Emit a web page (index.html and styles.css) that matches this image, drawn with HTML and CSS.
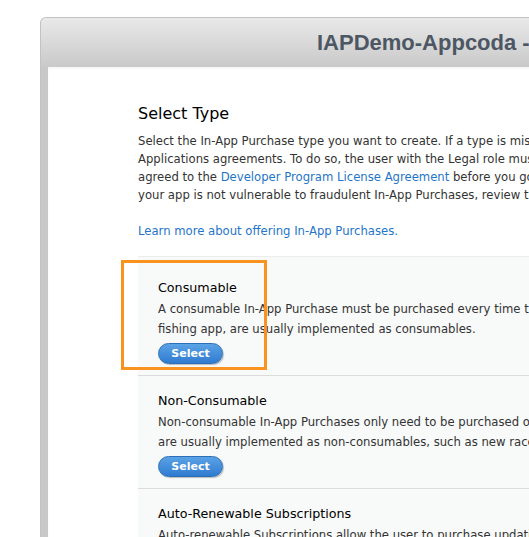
FILE: index.html
```html
<!DOCTYPE html>
<html lang="en">
<head>
  <meta charset="UTF-8">
  <title>IAPDemo-Appcoda</title>
  <link rel="stylesheet" href="styles.css">
</head>
<body>
  <div class="window">
    <div class="window-header">
      <h1 class="window-title">IAPDemo-Appcoda - In-App Purchases</h1>
    </div>
    <div class="window-body">
      <div class="panel">
        <h2 class="panel-title">Select Type</h2>
        <p class="intro">
          Select the In-App Purchase type you want to create. If a type is missing, make sure you have agreed to the latest Paid<br>
          Applications agreements. To do so, the user with the Legal role must go to Agreements, Tax, and Banking. You must also have<br>
          agreed to the <a href="#">Developer Program License Agreement</a> before you go live. To make sure<br>
          your app is not vulnerable to fraudulent In-App Purchases, review the guidelines.
        </p>
        <p class="intro intro-last"><a href="#">Learn more about offering In-App Purchases.</a></p>

        <ul class="type-list">
          <li class="type-item">
            <div class="highlight"></div>
            <div class="type-name">Consumable</div>
            <div class="type-desc">A consumable In-App Purchase must be purchased every time the user needs it. Items, such as bait in a<br>
              fishing app, are usually implemented as consumables.</div>
            <button class="btn-select">Select</button>
          </li>
          <li class="type-item">
            <div class="type-name">Non-Consumable</div>
            <div class="type-desc">Non-consumable In-App Purchases only need to be purchased once by users. Services that do not expire<br>
              are usually implemented as non-consumables, such as new race tracks for a game.</div>
            <button class="btn-select">Select</button>
          </li>
          <li class="type-item">
            <div class="type-name">Auto-Renewable Subscriptions</div>
            <div class="type-desc">Auto-renewable Subscriptions allow the user to purchase updating and dynamic content for a set<br>
              duration of time.</div>
            <button class="btn-select">Select</button>
          </li>
        </ul>
      </div>
    </div>
  </div>
</body>
</html>
```

FILE: styles.css
```css
html, body {
  margin: 0;
  padding: 0;
  background: #fff;
  overflow: hidden;
  height: 537px;
}
body {
  font-family: 'DejaVu Sans', sans-serif;
  padding: 17px 0 0 40px;
}
.window {
  width: 900px;
  border: 1px solid #c2c2c2;
  border-right: none;
  border-radius: 6px 0 0 0;
  background: #c8c8c8;
  overflow: hidden;
}
.window-header {
  height: 49px;
  background: linear-gradient(#e9e9e9, #c9c9c9);
  padding-left: 276px;
  box-sizing: border-box;
}
.window-title {
  margin: 0;
  font-family: 'Liberation Sans', Arial, sans-serif;
  font-weight: bold;
  font-size: 22px;
  line-height: 50px;
  color: #4c5763;
  white-space: nowrap;
}
.window-body {
  padding-left: 7px;
}
.panel {
  background: #fff;
  height: 500px;
  padding: 37px 0 0 90px;
  box-shadow: inset 0 2px 3px rgba(0,0,0,0.04);
}
.panel-title {
  margin: 0 0 8px;
  font-size: 16px;
  font-weight: normal;
  line-height: 20px;
  color: #000;
}
.intro {
  margin: 0 0 18px;
  font-size: 11.65px;
  line-height: 18px;
  color: #333;
  white-space: nowrap;
}
.intro-last {
  margin-bottom: 16px;
}
.intro a, .intro a:visited {
  color: #1f75c8;
  text-decoration: none;
}
.type-list {
  list-style: none;
  margin: 0;
  padding: 6px 0 0;
  width: 700px;
  background: #f8f9f9;
  border-top: 1px solid #ececec;
}
.type-item {
  position: relative;
  padding: 15px 0 11px 20px;
  border-bottom: 1px solid #dcdcdc;
}
.type-name {
  font-size: 12.7px;
  line-height: 20px;
  color: #000;
}
.type-desc {
  margin-top: 1px;
  font-size: 11.65px;
  line-height: 20px;
  color: #333;
  white-space: nowrap;
}
.btn-select {
  margin-top: 4px;
  width: 65px;
  height: 21px;
  padding: 0;
  border: 1px solid #2c6fb8;
  border-radius: 11px;
  background: linear-gradient(#5ba3e6, #2f7bd0);
  color: #fff;
  font-family: 'DejaVu Sans', sans-serif;
  font-size: 11px;
  font-weight: bold;
  box-shadow: 1px 1px 1px rgba(0,0,0,0.25);
}
.highlight {
  position: absolute;
  left: -17px;
  top: -3px;
  width: 146px;
  height: 110px;
  box-sizing: border-box;
  border: 3px solid #f7931e;
}
```
